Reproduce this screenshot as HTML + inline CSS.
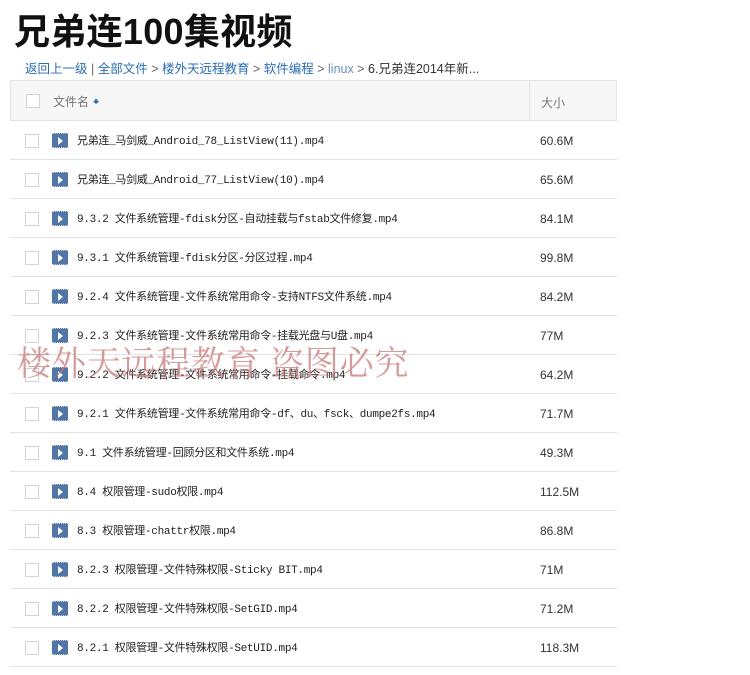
<!DOCTYPE html>
<html><head><meta charset="utf-8"><style>
body{margin:0;width:750px;height:675px;background:#fff;font-family:"Liberation Sans","Noto Sans CJK SC",sans-serif;position:relative;overflow:hidden}
h1{position:absolute;left:14px;top:3px;margin:0;font-size:36px;font-weight:bold;color:#111;letter-spacing:0.3px}
.bc{position:absolute;left:25px;top:58px;font-size:12.5px;color:#2a6db3}
.bc .g{color:#666}.bc .d{color:#333}.bc .l{color:#6b8fc0}
.hd{position:absolute;left:10px;top:80px;width:607px;height:41px;background:#f7f7f7;border:1px solid #e4e4e4;box-sizing:border-box}
.cb{position:absolute;width:12px;height:12px;border:1px solid #d3d3d3;background:#fff}
.row{position:absolute;left:10px;width:607px;height:39px;border-bottom:1px solid #e3e3e3;box-sizing:border-box}
.ic{position:absolute;left:42px;top:12px;width:16px;height:15px;background:#4f76a6;border-top:1px dotted #ccd;border-bottom:1px dotted #ccd;box-sizing:border-box}
.ic:after{content:"";position:absolute;left:6px;top:3px;border-left:5px solid #fff;border-top:4px solid transparent;border-bottom:4px solid transparent}
.nm{position:absolute;left:67px;top:11px;font-size:11px;color:#222;font-family:"Liberation Mono","Noto Sans CJK SC",monospace;letter-spacing:-0.3px}
.sz{position:absolute;left:530px;top:13px;font-size:12px;color:#333}
.wm{position:absolute;left:17px;top:336px;font-family:"Noto Serif CJK SC",serif;font-size:34px;color:rgba(200,120,120,0.75);white-space:nowrap;letter-spacing:0.8px}
</style></head><body>
<h1>兄弟连100集视频</h1>
<div class="bc">返回上一级 <span class="g">|</span> 全部文件 <span class="g">&gt;</span> 楼外天远程教育 <span class="g">&gt;</span> 软件编程 <span class="g">&gt;</span> <span class="l">linux</span> <span class="g">&gt;</span> <span class="d">6.兄弟连2014年新...</span></div>
<div class="hd"><div class="cb" style="left:15px;top:13px"></div><span style="position:absolute;left:42px;top:12px;font-size:12px;color:#777">文件名 <span style="color:#2a6db3">&#129083;</span></span><div style="position:absolute;left:518px;top:0;height:39px;border-left:1px solid #e4e4e4"></div><span style="position:absolute;left:530px;top:13px;font-size:12px;color:#777">大小</span></div>
<div class="row" style="top:121px"><div class="cb" style="left:15px;top:13px"></div><div class="ic"></div><div class="nm">兄弟连_马剑威_Android_78_ListView(11).mp4</div><div class="sz">60.6M</div></div>
<div class="row" style="top:160px"><div class="cb" style="left:15px;top:13px"></div><div class="ic"></div><div class="nm">兄弟连_马剑威_Android_77_ListView(10).mp4</div><div class="sz">65.6M</div></div>
<div class="row" style="top:199px"><div class="cb" style="left:15px;top:13px"></div><div class="ic"></div><div class="nm">9.3.2 文件系统管理-fdisk分区-自动挂载与fstab文件修复.mp4</div><div class="sz">84.1M</div></div>
<div class="row" style="top:238px"><div class="cb" style="left:15px;top:13px"></div><div class="ic"></div><div class="nm">9.3.1 文件系统管理-fdisk分区-分区过程.mp4</div><div class="sz">99.8M</div></div>
<div class="row" style="top:277px"><div class="cb" style="left:15px;top:13px"></div><div class="ic"></div><div class="nm">9.2.4 文件系统管理-文件系统常用命令-支持NTFS文件系统.mp4</div><div class="sz">84.2M</div></div>
<div class="row" style="top:316px"><div class="cb" style="left:15px;top:13px"></div><div class="ic"></div><div class="nm">9.2.3 文件系统管理-文件系统常用命令-挂载光盘与U盘.mp4</div><div class="sz">77M</div></div>
<div class="row" style="top:355px"><div class="cb" style="left:15px;top:13px"></div><div class="ic"></div><div class="nm">9.2.2 文件系统管理-文件系统常用命令-挂载命令.mp4</div><div class="sz">64.2M</div></div>
<div class="row" style="top:394px"><div class="cb" style="left:15px;top:13px"></div><div class="ic"></div><div class="nm">9.2.1 文件系统管理-文件系统常用命令-df、du、fsck、dumpe2fs.mp4</div><div class="sz">71.7M</div></div>
<div class="row" style="top:433px"><div class="cb" style="left:15px;top:13px"></div><div class="ic"></div><div class="nm">9.1 文件系统管理-回顾分区和文件系统.mp4</div><div class="sz">49.3M</div></div>
<div class="row" style="top:472px"><div class="cb" style="left:15px;top:13px"></div><div class="ic"></div><div class="nm">8.4 权限管理-sudo权限.mp4</div><div class="sz">112.5M</div></div>
<div class="row" style="top:511px"><div class="cb" style="left:15px;top:13px"></div><div class="ic"></div><div class="nm">8.3 权限管理-chattr权限.mp4</div><div class="sz">86.8M</div></div>
<div class="row" style="top:550px"><div class="cb" style="left:15px;top:13px"></div><div class="ic"></div><div class="nm">8.2.3 权限管理-文件特殊权限-Sticky BIT.mp4</div><div class="sz">71M</div></div>
<div class="row" style="top:589px"><div class="cb" style="left:15px;top:13px"></div><div class="ic"></div><div class="nm">8.2.2 权限管理-文件特殊权限-SetGID.mp4</div><div class="sz">71.2M</div></div>
<div class="row" style="top:628px"><div class="cb" style="left:15px;top:13px"></div><div class="ic"></div><div class="nm">8.2.1 权限管理-文件特殊权限-SetUID.mp4</div><div class="sz">118.3M</div></div>
<div class="wm">楼外天远程教育 盗图必究</div>
</body></html>
